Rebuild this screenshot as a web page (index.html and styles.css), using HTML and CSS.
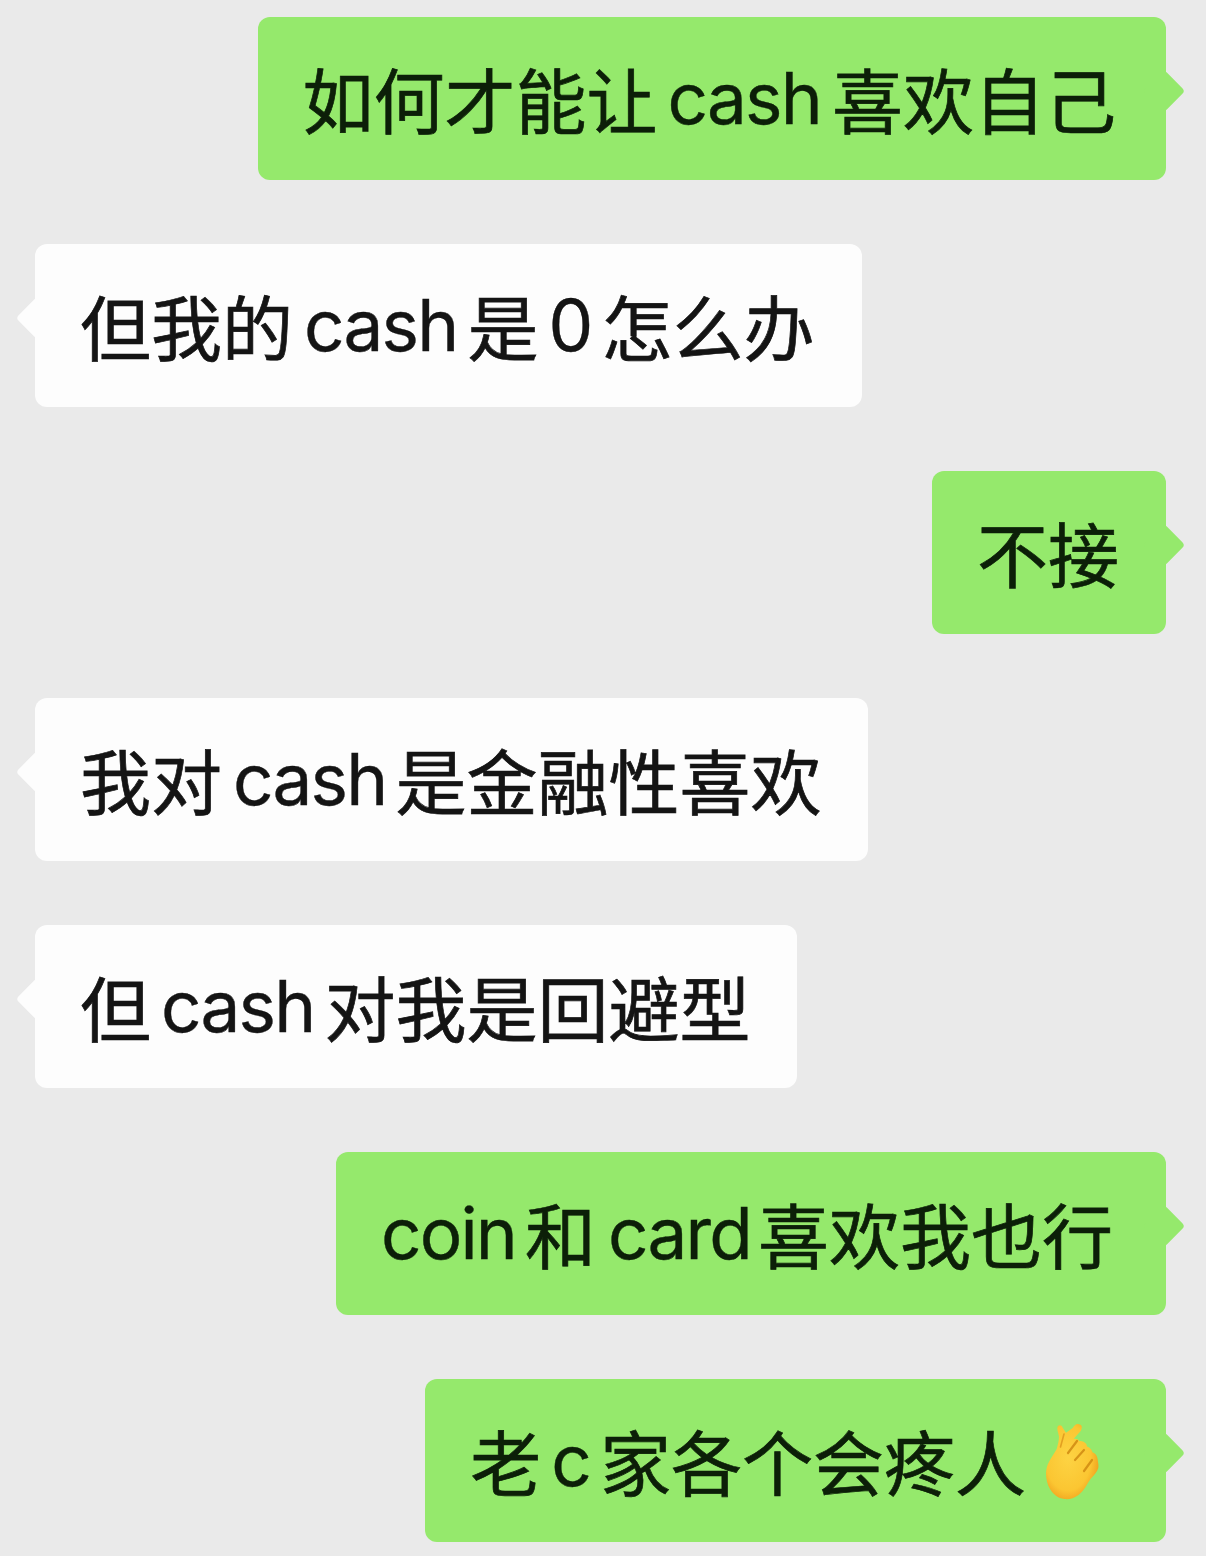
FILE: index.html
```html
<!DOCTYPE html>
<html lang="zh">
<head>
<meta charset="utf-8">
<title>Chat</title>
<link rel="stylesheet" href="styles.css">
</head>
<body>
<main class="chat">
  <div class="bubble me b1">如何才能让<span class="lat ml10 mr11">cash</span>喜欢自己</div>
  <div class="bubble them b2">但我的<span class="lat ml11 mr10">cash</span>是<span class="lat ml10 mr10">0</span>怎么办</div>
  <div class="bubble me b3">不接</div>
  <div class="bubble them b4">我对<span class="lat ml11">cash</span>是金融性喜欢</div>
  <div class="bubble them b4">但<span class="lat ml10 mr10">cash</span>对我是回避型</div>
  <div class="bubble me b6"><span class="lat first">coin</span>和<span class="lat ml12 mr7">card</span>喜欢我也行</div>
  <div class="bubble me">老<span class="lat ml10 mr10">c</span>家各个会疼人<svg class="emoji" viewBox="0 0 54 77" aria-label="🤞">
    <defs><radialGradient id="hand" cx="0.42" cy="0.45" r="0.62"><stop offset="0" stop-color="#fdd343"/><stop offset="0.7" stop-color="#fbc632"/><stop offset="1" stop-color="#ef9f1c"/></radialGradient></defs>
    <path fill="url(#hand)" d="M11.7 3.5C13 1.8 15.5 1.8 16.7 4.7L20 9.7 26.7 5C28.5 2.4 30 .8 32 1c2.8.2 4.3 1.8 3.7 4.2-.3 1.2-.7 2.3-1.4 3.3L27.5 16c2.3-.5 4.5.2 6 2 2.3-.3 5 .6 6.8 3 .4 1 .5 1.5.7 2.6 2.5.6 4.4 2.6 5.5 5.6 2.8.8 4.9 3.4 5.2 7.3.1 2.3 1.2 5.6.6 8.5-1 4-4.3 7.2-7.8 11C41 61 38 68 32.5 72c-4.5 3.4-9.5 4.6-14.2 4C12 75.3 7.3 71.4 4 66 1.300 61.500 0 56 0 50 .2 46 1 42.500 2.800 39.200 5 34.800 8 31 10.700 26 11.700 22 13 18 13 13.500 12.500 10 10.500 6 11.700 3.500Z"/>
    <path fill="none" stroke="#cf8a12" stroke-width="2.200" stroke-linecap="round" opacity="0.85" d="M31 18 22 30M38 27 29 37M46 37 38 48"/>
    <path fill="none" stroke="#e3a021" stroke-width="1.600" stroke-linecap="round" d="M18 11 14.500 24"/>
  </svg></div>
</main>
</body>
</html>
```
FILE: styles.css
```css
html, body {
  margin: 0;
  height: 1556px;
  overflow: hidden;
  background: #eaeaea;
}
.chat {
  display: flex;
  flex-direction: column;
  align-items: flex-start;
  gap: 64px;
  padding: 17px 40px 0 35px;
  font-family: "Noto Sans CJK SC", "Liberation Sans", sans-serif;
  font-size: 71px;
  font-weight: 400;
  color: #141414;
  -webkit-text-stroke: 0.7px currentColor;
}
.bubble {
  position: relative;
  display: flex;
  align-items: center;
  height: 163px;
  padding: 0 46px 4px 45px;
  box-sizing: border-box;
  border-radius: 12px;
  white-space: nowrap;
}
.bubble::after {
  content: "";
  position: absolute;
  top: 59px;
  width: 30px;
  height: 30px;
  border-radius: 4px;
  transform: rotate(45deg);
  background: inherit;
}
.me {
  align-self: flex-end;
  background: #95e96c;
  color: #0c1f08;
}
.me::after { right: -13px; }
.them { background: #fdfdfd; }
.them::after { left: -13px; }
.b1 { padding-right: 50px; }
.b2 { padding-right: 48px; }
.b3 { padding-right: 47px; }
.b4 { padding-right: 47px; }
.b6 { padding-right: 53px; }
.lat {
  font-family: Inter, "Liberation Sans", sans-serif;
  font-size: 71px;
  letter-spacing: -1.8px;
  -webkit-text-stroke: 0.4px currentColor;
  margin: 3px 9px 0;
}
.first { margin-left: 0; }
.ml10 { margin-left: 10px; }
.ml11 { margin-left: 11px; }
.ml12 { margin-left: 12px; }
.mr7 { margin-right: 7px; }
.mr10 { margin-right: 10px; }
.mr11 { margin-right: 11px; }
.emoji {
  width: 54px;
  height: 77px;
  margin: 5px 20px 0;
}
```
